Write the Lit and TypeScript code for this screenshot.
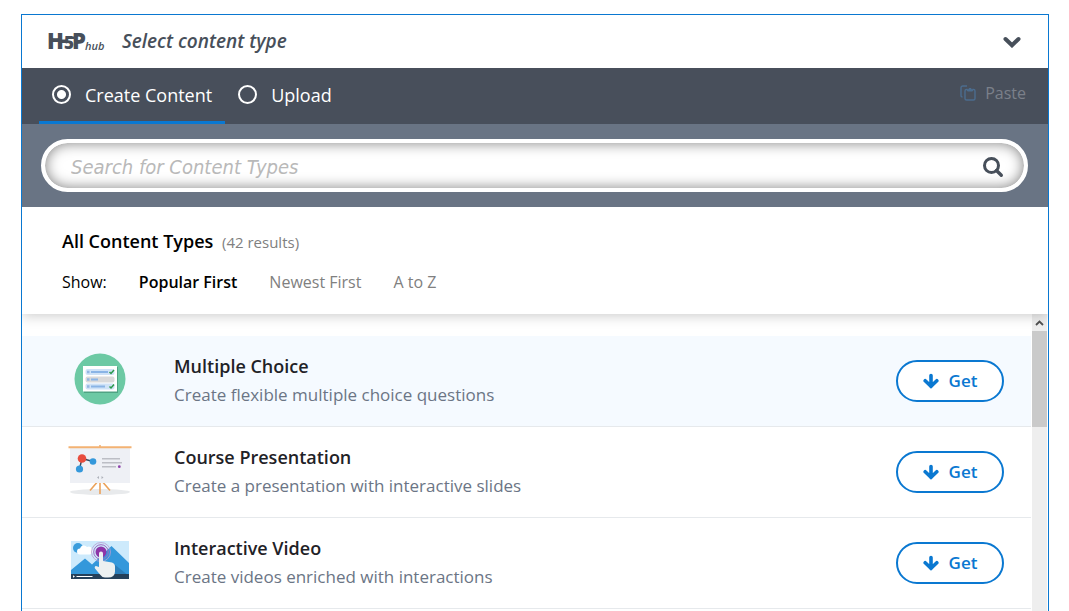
import { LitElement, html, svg, css } from "lit";
import { customElement, property, state } from "lit/decorators.js";
import { classMap } from "lit/directives/class-map.js";

const multipleChoiceArt = svg`
  <circle cx="32" cy="26" r="25.500" fill="#6cc9a4"></circle>
  <path d="M16 14h34v26H16z" fill="#4fa383"></path>
  <path d="M15 13h34v25.500H15z" fill="#fff"></path>
  <rect x="17.500" y="16" width="29" height="6" rx="2" fill="#cfe2f7"></rect>
  <rect x="17.500" y="23.500" width="29" height="6" rx="2" fill="#d9d9da"></rect>
  <rect x="17.500" y="30.500" width="29" height="6" rx="2" fill="#cfe2f7"></rect>
  <path d="M19 17.800h2.500v2.500H19zM19 32.300h2.500v2.500H19zM19 25.200h2.500v2.500H19z" fill="#93b6e2"></path>
  <path d="M23 18h17v2H23zM23 25.500h7v2h-7zM23 32.500h14v2H23z" fill="#8ab4e6"></path>
  <path d="M41.500 19l1.500 1.500 3-3.500M41.500 33.500l1.500 1.500 3-3.500" fill="none" stroke="#2d9a4b" stroke-width="1.500"></path>`;

const presentationArt = svg`
  <ellipse cx="32" cy="48" rx="30" ry="3" fill="#e8eaec"></ellipse>
  <path d="M31 36L22 46.500M33 36l9 10.500M32 36v14" stroke="#eba25a" stroke-width="1.600" fill="none"></path>
  <path d="M2 4h60v35H2z" fill="#eef0f5"></path>
  <path d="M.5 2.200h63v2H.5zM31.200 1h1.600v3h-1.600z" fill="#f3b273"></path>
  <path d="M14 14.500L11.500 25M14 14.500L25 17.500" stroke="#34495e" stroke-width="1.400"></path>
  <circle cx="14" cy="14.500" r="4.300" fill="#e84c3d"></circle>
  <circle cx="11.500" cy="25" r="3.600" fill="#3498db"></circle>
  <circle cx="25" cy="17.500" r="3.300" fill="#3498db"></circle>
  <path d="M34 14.700h18M34 18.700h20M34 22.700h14" stroke="#bcbec5" stroke-width="1.500"></path>
  <circle cx="51.300" cy="22.700" r="1.400" fill="#8e44ad"></circle>
  <path d="M31 32l-2 1.500 2 1.500zM33.500 32l2 1.500-2 1.500z" fill="#aeb2ba"></path>`;

const videoArt = svg`
  <path d="M3 6h58v38H3z" fill="#cdeafc"></path>
  <circle cx="10" cy="13" r="5" fill="#3b9ddc"></circle>
  <path d="M12 19.500a3 3 0 010-6 4 4 0 017-1.500 3.800 3.800 0 013 7.500z" fill="#fff"></path>
  <path d="M3 35L17 23.500l7 6L43.500 11 61 28v12H3z" fill="#3498db"></path>
  <path d="M46 29l15 12V39H44z" fill="#2c7fbb"></path>
  <path d="M3 39h58v5H3z" fill="#25405a"></path>
  <path d="M5 40.200l2 1.300-2 1.300zM8.500 41h16v1h-16z" fill="#fff"></path>
  <circle cx="33" cy="17" r="9.500" fill="none" stroke="#b99bd0" stroke-width=".8"></circle>
  <circle cx="33" cy="17" r="7.300" fill="none" stroke="#a06bbf" stroke-width="1"></circle>
  <circle cx="33" cy="17" r="5.500" fill="#8e35a8"></circle>
  <path d="M31 18.500a2 2 0 014 0v7.500l9 1.500q3 1 3 4v5q0 6-7 6h-3q-3 0-5-3l-5-6q-1-2 1-2.500l3 1z" fill="#ecf0f1"></path>`;

interface ContentType {
  title: string;
  summary: string;
  art: unknown;
}

const CONTENT_TYPES: ContentType[] = [
  { title: "Multiple Choice", summary: "Create flexible multiple choice questions", art: multipleChoiceArt },
  { title: "Course Presentation", summary: "Create a presentation with interactive slides", art: presentationArt },
  { title: "Interactive Video", summary: "Create videos enriched with interactions", art: videoArt },
];

@customElement("content-type-row")
class ContentTypeRow extends LitElement {
  @property({ attribute: false }) item!: ContentType;
  @property({ type: Boolean, reflect: true }) highlighted = false;

  static styles = css`
    :host {
      display: flex;
      align-items: center;
      box-sizing: border-box;
      min-height: 91px;
      padding: 0 27px 0 46px;
      border-bottom: 1px solid #e6e9ec;
      background: #fff;
    }
    :host([highlighted]) { background: #f5faff; }
    .art { flex: none; width: 64px; height: 52px; margin-bottom: 4px; }
    .words { flex: 1; min-width: 0; margin-left: 42px; }
    .title { margin: 0; font-size: 18px; font-weight: 600; line-height: 28px; color: #1f2227; }
    .summary { margin: 0; padding: 1px 0 2px; font-size: 17px; line-height: 28px; color: #6b7585; }
    .get {
      display: flex;
      align-items: center;
      justify-content: center;
      gap: 10px;
      box-sizing: border-box;
      width: 108px;
      height: 42px;
      padding: 0;
      border: 2px solid #0a78d1;
      border-radius: 21px;
      background: #fff;
      color: #0a78d1;
      font: 600 17px/24px "Open Sans", sans-serif;
      cursor: pointer;
    }
  `;

  render() {
    return html`
      <svg class="art" viewBox="0 0 64 52" aria-hidden="true">${this.item.art}</svg>
      <div class="words">
        <h3 class="title">${this.item.title}</h3>
        <p class="summary">${this.item.summary}</p>
      </div>
      <button class="get" type="button">
        <svg width="16" height="16" viewBox="0 0 16 16" aria-hidden="true">
          <path d="M8 2.500v11M2.200 7.700L8 13.200l5.800-5.500" fill="none" stroke="currentColor" stroke-width="3.600" stroke-linecap="round"></path>
        </svg>
        Get
      </button>
    `;
  }
}

@customElement("app-root")
class AppRoot extends LitElement {
  @state() private order = "Popular First";

  static styles = css`
    :host {
      display: flex;
      box-sizing: border-box;
      height: 100vh;
      padding: 14px 20px 0 21px;
      overflow: hidden;
      background: #fff;
      font-family: "Open Sans", sans-serif;
    }
    .hub {
      flex: 1;
      display: flex;
      flex-direction: column;
      min-width: 0;
      border: 1px solid #0a78d1;
      border-bottom: 0;
    }
    .header {
      display: flex;
      align-items: center;
      height: 53px;
      padding: 0 27px 0 26px;
      color: #474f5a;
    }
    .logo { width: 58px; height: 36px; margin-right: 16px; fill: currentColor; }
    .heading {
      flex: 1;
      margin: 0;
      padding-bottom: 2px;
      font-size: 19px;
      font-weight: 600;
      font-style: italic;
      line-height: 28px;
    }
    .toggle { padding: 0; border: 0; background: none; color: inherit; display: flex; }
    .tabs { display: flex; height: 56px; padding: 0 22px 0 17px; background: #484f5b; color: #fff; }
    .tab {
      display: flex;
      align-items: center;
      gap: 14px;
      padding: 0 13px;
      border-bottom: 3px solid transparent;
      font-size: 18px;
      line-height: 28px;
    }
    .tab:has(:checked) { border-color: #0a78d1; }
    .radio {
      appearance: none;
      box-sizing: border-box;
      width: 19px;
      height: 19px;
      margin: 0;
      border: 2px solid #fff;
      border-radius: 50%;
    }
    .radio:checked { background: radial-gradient(circle, #fff 4px, transparent 5px); }
    .paste {
      display: flex;
      align-items: center;
      gap: 9px;
      margin-left: auto;
      padding: 0 0 6px;
      border: 0;
      background: none;
      color: #7b808a;
      font: 16px/24px "Open Sans", sans-serif;
    }
    .search { padding: 15px 20px 15px 19px; background: #697484; }
    .field {
      display: flex;
      align-items: center;
      box-sizing: border-box;
      height: 53px;
      padding: 2px 20px 0 26px;
      border: 4px solid #fff;
      border-radius: 27px;
      background: #fff;
      box-shadow: inset 0 0 14px rgba(0, 0, 0, 0.5);
    }
    .query {
      flex: 1;
      min-width: 0;
      padding: 0;
      border: 0;
      outline: 0;
      background: none;
      font: italic 20px/28px "DejaVu Sans Condensed", "DejaVu Sans", sans-serif;
    }
    .query::placeholder { color: #b9b9b9; opacity: 1; }
    .go { display: flex; padding: 0; border: 0; background: none; color: #474f5a; }
    .filters {
      position: relative;
      padding: 20px 40px 19px;
      background: #fff;
      box-shadow: 0 2px 12px rgba(0, 0, 0, 0.2);
      clip-path: inset(0 0 -24px 0);
    }
    .results { margin: 0; font-size: 18px; font-weight: 600; line-height: 28px; color: #000; }
    .count { margin-left: 4px; font-size: 15px; font-weight: 400; color: #808080; }
    .sort { display: flex; gap: 32px; margin-top: 13px; font-size: 16px; line-height: 26px; }
    .order { padding: 0; border: 0; background: none; color: #808080; font: inherit; cursor: pointer; }
    .chosen { color: #000; font-weight: 600; }
    .list { flex: 1; display: flex; gap: 1px; min-height: 0; padding-right: 1px; overflow: hidden; }
    .rows { flex: 1; min-width: 0; padding-top: 22px; }
    .bar { width: 15px; background: #eee; }
    .up { display: flex; justify-content: center; align-items: center; height: 17px; }
    .thumb { height: 96px; background: #cacaca; }
  `;

  private renderOrder(name: string) {
    return html`<button
      type="button"
      class=${classMap({ order: true, chosen: name === this.order })}
      @click=${() => (this.order = name)}
    >${name}</button>`;
  }

  render() {
    return html`
      <main class="hub">
        <header class="header">
          <svg class="logo" viewBox="0 0 58 36" role="img" aria-label="H5P hub" font-family="Open Sans, sans-serif">
            <text x="-1" y="25" font-size="22" font-weight="800">H</text>
            <path d="M12 15.500h7.500v3.500H12z"></path>
            <text x="16" y="25" font-size="17" font-weight="800">5</text>
            <path d="M18.500 12.500h8v2.500h-8z"></path>
            <text x="24" y="25" font-size="22" font-weight="800">P</text>
            <text x="37" y="26" font-size="11" font-weight="600" font-style="italic">hub</text>
          </svg>
          <h1 class="heading">Select content type</h1>
          <button class="toggle" type="button" aria-label="Collapse">
            <svg width="18" height="12" viewBox="0 0 18 12" aria-hidden="true">
              <path d="M2.500 3L9 9.300l6.500-6.300" fill="none" stroke="currentColor" stroke-width="4" stroke-linecap="round"></path>
            </svg>
          </button>
        </header>

        <nav class="tabs">
          <label class="tab"><input class="radio" type="radio" name="mode" checked />Create Content</label>
          <label class="tab"><input class="radio" type="radio" name="mode" />Upload</label>
          <button class="paste" type="button" disabled>
            <svg width="16" height="16" viewBox="0 0 16 16" fill="none" stroke="#4b6c8e" stroke-width="1.400" aria-hidden="true">
              <path d="M7 4.500H6.500q-1.500 0-1.500 1.500v7.500q0 1.500 1.500 1.500h7q1.500 0 1.500-1.500V6q0-1.500-1.500-1.500H13M2.500 12Q1 12 1 10.500V3q0-2 2-2h4"></path>
              <path d="M7.500 6V4.200h1.300q1.200-2.400 2.400 0h1.300V6z" fill="#4b6c8e" stroke-width="1"></path>
            </svg>
            Paste
          </button>
        </nav>

        <form class="search" role="search" @submit=${(e: Event) => e.preventDefault()}>
          <div class="field">
            <input class="query" type="text" aria-label="Search for Content Types" placeholder="Search for Content Types" />
            <button class="go" type="submit" aria-label="Search">
              <svg width="22" height="22" viewBox="0 0 22 22" fill="none" stroke="currentColor" aria-hidden="true">
                <circle cx="9.500" cy="9.500" r="7" stroke-width="3"></circle>
                <path d="M14.500 14.500l4.800 4.800" stroke-width="3.400" stroke-linecap="round"></path>
              </svg>
            </button>
          </div>
        </form>

        <section class="filters">
          <h2 class="results">All Content Types <span class="count">(42 results)</span></h2>
          <div class="sort">
            <span>Show:</span>
            ${["Popular First", "Newest First", "A to Z"].map((name) => this.renderOrder(name))}
          </div>
        </section>

        <div class="list">
          <div class="rows">
            ${CONTENT_TYPES.map(
              (item, i) => html`<content-type-row .item=${item} ?highlighted=${i === 0}></content-type-row>`
            )}
          </div>
          <div class="bar" aria-hidden="true">
            <div class="up">
              <svg width="9" height="6" viewBox="0 0 9 6"><path d="M1 5l3.500-3.500L8 5" fill="none" stroke="#505050" stroke-width="1.800"></path></svg>
            </div>
            <div class="thumb"></div>
          </div>
        </div>
      </main>
    `;
  }
}
